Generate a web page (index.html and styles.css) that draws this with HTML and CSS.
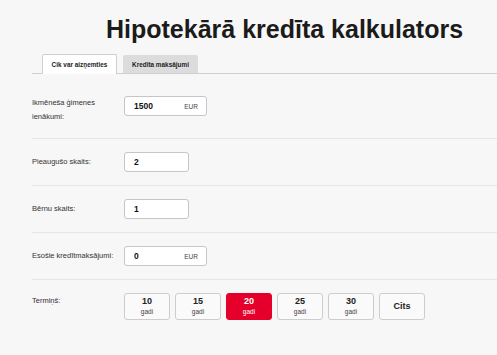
FILE: index.html
```html
<!DOCTYPE html>
<html lang="lv">
<head>
    <meta charset="UTF-8">
    <meta name="viewport" content="width=device-width, initial-scale=1.0">
    <title>Hipotekārā kredīta kalkulators</title>
    <link rel="stylesheet" href="styles.css">
</head>
<body>
    <div class="calculator">
        <h1 class="title">Hipotekārā kredīta kalkulators</h1>

        <!-- Cilnes -->
        <div class="tabs">
            <div class="tab active">Cik var aizņemties</div>
            <div class="tab">Kredīta maksājumi</div>
        </div>

        <!-- Forma -->
        <div class="panel">
            <div class="row first">
                <div class="label">Ikmēneša ģimenes ienākumi:</div>
                <div class="field wide">
                    <span class="value">1500</span>
                    <span class="unit">EUR</span>
                </div>
            </div>
            <div class="row">
                <div class="label">Pieaugušo skaits:</div>
                <div class="field">
                    <span class="value">2</span>
                </div>
            </div>
            <div class="row">
                <div class="label">Bērnu skaits:</div>
                <div class="field">
                    <span class="value">1</span>
                </div>
            </div>
            <div class="row">
                <div class="label">Esošie kredītmaksājumi:</div>
                <div class="field wide">
                    <span class="value">0</span>
                    <span class="unit">EUR</span>
                </div>
            </div>
            <div class="row term">
                <div class="label">Termiņš:</div>
                <div class="terms">
                    <button class="term-btn"><span class="years">10</span><span class="gadi">gadi</span></button>
                    <button class="term-btn"><span class="years">15</span><span class="gadi">gadi</span></button>
                    <button class="term-btn selected"><span class="years">20</span><span class="gadi">gadi</span></button>
                    <button class="term-btn"><span class="years">25</span><span class="gadi">gadi</span></button>
                    <button class="term-btn"><span class="years">30</span><span class="gadi">gadi</span></button>
                    <button class="term-btn other"><span class="years">Cits</span></button>
                </div>
            </div>
        </div>
    </div>
</body>
</html>
```

FILE: styles.css
```css
* {
    margin: 0;
    padding: 0;
    box-sizing: border-box;
}

body {
    background: #f7f7f7;
    font-family: 'Liberation Sans', Arial, sans-serif;
    color: #333;
}

.calculator {
    padding-left: 32px;
}

.title {
    padding: 15px 0 0 74px;
    font-size: 25px;
    line-height: 29px;
    font-weight: bold;
    color: #1b1b1b;
    white-space: nowrap;
}

.tabs {
    display: flex;
    align-items: flex-end;
    gap: 6px;
    margin-top: 10px;
    padding-left: 10px;
    border-bottom: 1px solid #cfcfcf;
}

.tab {
    width: 75px;
    height: 18px;
    display: flex;
    align-items: center;
    justify-content: center;
    background: #dcdcdc;
    font-size: 6.4px;
    font-weight: bold;
    color: #222;
    border-radius: 2px 2px 0 0;
}

.tab.active {
    height: 20px;
    margin-bottom: -1px;
    background: #fff;
    border: 1px solid #cfcfcf;
    border-bottom: none;
}

.row {
    display: flex;
    align-items: center;
    padding: 13px 0;
    border-bottom: 1px solid #e6e6e6;
}

.row.first {
    align-items: flex-start;
    padding: 22px 0 14px;
}

.row.term {
    align-items: flex-start;
    border-bottom: none;
}

.label {
    width: 92px;
    flex-shrink: 0;
    padding-right: 5px;
    font-size: 7.5px;
    line-height: 14px;
    color: #333;
}

.row.first .label {
    padding-right: 20px;
}

.row.term .label {
    padding-top: 1px;
}

.field {
    display: flex;
    align-items: center;
    justify-content: space-between;
    width: 65px;
    height: 20px;
    padding: 0 8px 0 9px;
    background: #fff;
    border: 1px solid #c6c6c6;
    border-radius: 3px;
}

.field.wide {
    width: 83px;
}

.value {
    font-size: 8.5px;
    font-weight: bold;
    color: #111;
}

.unit {
    font-size: 6.5px;
    color: #444;
}

.terms {
    display: flex;
    gap: 5px;
}

.term-btn {
    width: 46px;
    height: 27px;
    display: flex;
    flex-direction: column;
    align-items: center;
    justify-content: center;
    background: #fafafa;
    border: 1px solid #cdcdcd;
    border-radius: 3px;
    font-family: inherit;
    color: #222;
}

.years {
    font-size: 9px;
    font-weight: bold;
    line-height: 11px;
}

.gadi {
    font-size: 6.5px;
    line-height: 10px;
    color: #444;
}

.term-btn.selected {
    background: #e4002b;
    border-color: #e4002b;
    color: #fff;
}

.term-btn.selected .gadi {
    color: #fff;
}
```
